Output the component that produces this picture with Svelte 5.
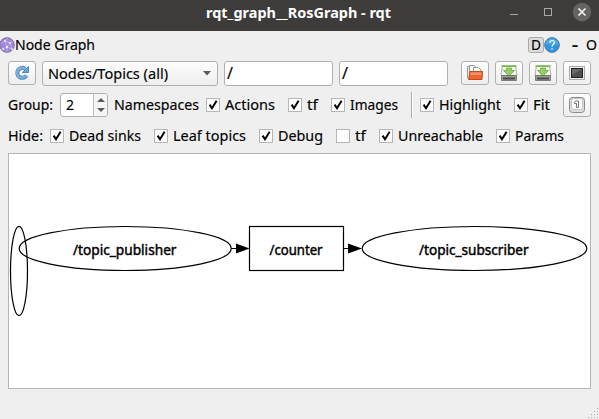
<script>
  const groups = $state([
    { name: 'Actions', w: 50, on: true },
    { name: 'tf', w: 11, on: true },
    { name: 'Images', w: 48, on: true }
  ]);
  const view = $state([
    { name: 'Highlight', w: 62, on: true },
    { name: 'Fit', w: 17, on: true }
  ]);
  const hidden = $state([
    { name: 'Dead sinks', w: 72, on: true },
    { name: 'Leaf topics', w: 73, on: true },
    { name: 'Debug', w: 45, on: true },
    { name: 'tf', w: 11, on: false },
    { name: 'Unreachable', w: 85, on: true },
    { name: 'Params', w: 49, on: true }
  ]);
</script>

{#snippet label(text, w)}
  <svg class="label" width={w} height="20"><text x="0" y="15" textLength={w} lengthAdjust="spacingAndGlyphs">{text}</text></svg>
{/snippet}

{#snippet check(item)}
  <button class="check" role="checkbox" aria-checked={item.on} aria-label={item.name} onclick={() => (item.on = !item.on)}>
    <span class="box">
      {#if item.on}
        <svg width="12" height="12"><path d="M2.6 5.6 5 9.2 9.6 1.8" fill="none" stroke="#000" stroke-width="2" /></svg>
      {/if}
    </span>
    {@render label(item.name, item.w)}
  </button>
{/snippet}

{#snippet save()}
  <svg width="18" height="18" viewBox="0 0 18 18">
    <path d="M2.300 2.500h13.400l1.300 9H1z" fill="#f4f4f1" stroke="#9b9d98" stroke-width=".8" />
    <path d="M1.500 1.200h15v1.800h-15z" fill="#72b84b" />
    <path d="M3 3h12v1.300H3z" fill="#fff" />
    <path d="M6.500 4h5v2.500h3L9 12 3.500 6.500h3z" fill="#99cf62" stroke="#6aa644" stroke-width=".8" />
    <path d="M1.500 11.500h15v5h-15z" fill="#999b96" stroke="#696b67" stroke-width=".8" />
    <path d="M3 14.500h12" stroke="#4b4d49" stroke-width="2" />
  </svg>
{/snippet}

<main>
  <header>
    <svg class="title" width="185" height="24"><text x="0" y="18" textLength="185" lengthAdjust="spacingAndGlyphs">rqt_graph__RosGraph - rqt</text></svg>
    <svg class="window" width="95" height="24" viewBox="0 0 95 24">
      <path d="M6 14.500h8" stroke="#a9a8a5" />
      <rect x="40.500" y="8.500" width="7" height="7" fill="none" stroke="#a9a8a5" />
      <circle cx="78" cy="12" r="9.200" fill="#666562" />
      <path d="m74.500 8.500 7 7m0-7-7 7" stroke="#fff" stroke-width="1.500" />
    </svg>
  </header>

  <div class="dock">
    <svg width="15" height="16" viewBox="0 0 15 16">
      <circle cx="7" cy="8" r="7.300" fill="#a186dd" stroke="#77718a" />
      <path d="m1 7 4-3 5 2 3-2M5 4l2 6-4 2M10 6l-3 4 5 2M7 10v5M5 4l3-3M10 6l2 6" fill="none" stroke="#cbb8ef" stroke-width=".7" />
      <g fill="#f0e9ff"><circle cx="5" cy="4" r="1.100" /><circle cx="10" cy="6" r="1.100" /><circle cx="7" cy="10" r="1.200" /><circle cx="3" cy="12" r=".9" /><circle cx="12" cy="12" r=".9" /></g>
    </svg>
    {@render label('Node Graph', 80)}
    <span class="grow"></span>
    <span class="dbtn">{@render label('D', 10)}</span>
    <svg class="help" width="16" height="16" viewBox="0 0 16 16">
      <circle cx="8" cy="8" r="7.400" fill="#2d94df" stroke="#5f8098" />
      <path d="M1.500 8a6.500 6.500 0 0 1 13 0q-6-2-13 0" fill="#51abe8" />
      <path d="M5.700 5.600Q6 3.500 8.200 3.500t2.200 2Q10.400 7 8.800 8 8 8.700 8 9.800" fill="none" stroke="#fff" stroke-width="1.200" />
      <path d="M8 11.200v1.400" stroke="#fff" stroke-width="1.400" />
    </svg>
    <span class="dash">{@render label('-', 6)}</span>
    <span class="float">{@render label('O', 11)}</span>
  </div>

  <div class="tools">
    <button class="tool" aria-label="Refresh">
      <svg width="18" height="18" viewBox="0 0 18 18">
        <path d="M12.200 4.800A5 5 0 1 0 13.500 11.500" fill="none" stroke="#4f8abd" stroke-width="4" />
        <path d="M9.500 8.500h6V2.500z" fill="#6ba5d5" stroke="#4f8abd" />
        <path d="M12.200 4.900A5 5 0 1 0 13.200 11.500" fill="none" stroke="#7fb2dc" stroke-width="2.200" />
      </svg>
    </button>
    <div class="combo">
      {@render label('Nodes/Topics (all)', 120)}
      <svg width="8" height="5"><path d="M0 0h8L4 4.500z" fill="#5b5b5b" /></svg>
    </div>
    <div class="field">{@render label('/', 6)}</div>
    <div class="field">{@render label('/', 6)}</div>
    <span class="grow"></span>
    <button class="tool" aria-label="Open">
      <svg width="18" height="18" viewBox="0 0 18 18">
        <path d="M1.500 14V2.500h4" fill="#eee" stroke="#999" />
        <path d="M3.500 14V1.500h5l1.500 2V8" fill="#fff" stroke="#999" />
        <path d="M7.500 9V3.500h5l2.500 2.500v3" fill="#fff" stroke="#999" />
        <path d="M4 7.500h12.500l-.5 8H2.500z" fill="#ec6534" stroke="#c94719" />
        <path d="M4.500 8.500h11l-.3 2.500H4.200z" fill="#f5936c" />
      </svg>
    </button>
    <button class="tool" aria-label="Save DOT">{@render save()}</button>
    <button class="tool" aria-label="Save SVG">{@render save()}</button>
    <button class="tool" aria-label="Save image">
      <svg width="18" height="18" viewBox="0 0 18 18">
        <rect x="1.500" y="2.500" width="15" height="13" fill="#eee" stroke="#aaa" />
        <rect x="3.500" y="4.500" width="11" height="9" fill="#505050" stroke="#222" />
        <path d="M4 5h10L4 11z" fill="#6a6a6a" />
      </svg>
    </button>
  </div>

  <div class="options">
    {@render label('Group:', 45)}
    <div class="spin">
      <span class="value">{@render label('2', 8)}</span>
      <span class="steps">
        <svg width="8" height="4"><path d="M0 4 4 0l4 4z" fill="#5b5b5b" /></svg>
        <svg width="8" height="4"><path d="m0 0 4 4 4-4z" fill="#5b5b5b" /></svg>
      </span>
    </div>
    {@render label('Namespaces', 85)}
    <div class="checks">{#each groups as item}{@render check(item)}{/each}</div>
    <i class="separator"></i>
    <div class="checks second">{#each view as item}{@render check(item)}{/each}</div>
    <span class="grow"></span>
    <button class="tool" aria-label="Fit in view">
      <svg width="18" height="18" viewBox="0 0 18 18">
        <rect x="1.500" y="1.500" width="15" height="15" rx="3" fill="#ddd" stroke="#8a8a8a" />
        <rect x="3.500" y="2.500" width="11" height="11" rx="2" fill="#fafafa" stroke="#c5c5c5" />
        <path d="M8.500 11.500v-4h-2v-1.500l1.500-1h2.500v6.500z" fill="#fff" stroke="#777" />
      </svg>
    </button>
  </div>

  <div class="hide">
    {@render label('Hide:', 35)}
    <div class="checks">{#each hidden as item}{@render check(item)}{/each}</div>
  </div>

  <section>
    <svg width="581" height="234" viewBox="9 154 581 234">
      <g fill="none" stroke="#000" stroke-width="1.200">
        <ellipse cx="19" cy="271" rx="8.500" ry="44.700" />
        <ellipse cx="125.200" cy="248.500" rx="106" ry="22" />
        <rect x="249.500" y="226.500" width="94" height="44" />
        <ellipse cx="474.500" cy="248.500" rx="112.300" ry="22" />
        <path d="M231 248.500h6M343.500 248.500h6" />
      </g>
      <path d="m236 243.500 13.500 5-13.500 5zM348 243.500l14 5-14 5z" />
      <g class="node">
        <text x="73" y="254.500" textLength="103.500" lengthAdjust="spacingAndGlyphs">/topic_publisher</text>
        <text x="269.500" y="254.500" textLength="53" lengthAdjust="spacingAndGlyphs">/counter</text>
        <text x="419" y="254.500" textLength="109.500" lengthAdjust="spacingAndGlyphs">/topic_subscriber</text>
      </g>
    </svg>
  </section>
  <footer>
    <svg width="11" height="11"><path d="M9 0h1v1H9zM6 3h1v1H6zM9 3h1v1H9zM3 6h1v1H3zM6 6h1v1H6zM9 6h1v1H9zM0 9h1v1H0zM3 9h1v1H3zM6 9h1v1H6zM9 9h1v1H9z" fill="#aaa" /></svg>
  </footer>
</main>

<style>
  :global(body) { margin: 0; }
  * { box-sizing: border-box; }
  main {
    width: 599px; height: 419px; overflow: hidden; background: #efefef;
    display: flex; flex-direction: column;
    font-family: "Noto Sans", "Open Sans", sans-serif; font-size: 14.300px; color: #000;
  }
  svg { display: block; flex: none; }
  .label { overflow: visible; stroke: #000; stroke-width: .15; }
  header { height: 31px; background: #3d3c3a; display: flex; flex: none; padding-left: 206px; }
  .title { fill: #fff; font-size: 14px; font-weight: 700; overflow: visible; }
  .window { margin-left: 113px; }
  .grow { flex: 1; }
  .dock { height: 30px; display: flex; align-items: center; flex: none; padding: 0 1px 3px 0; }
  .dbtn {
    width: 16px; height: 16px; display: flex; align-items: center; justify-content: center;
    border: 1px solid #aaa; border-radius: 3px; background: #dedede;
  }
  .dash { margin-left: 12px; font-weight: 700; }
  .float { margin-left: 8px; }
  .dock { padding-right: 2px; }
  .tools { height: 25px; display: flex; gap: 6px; padding: 0 8px; flex: none; }
  button { appearance: none; margin: 0; padding: 0; border: 0; background: none; font: inherit; }
  .tool, .combo, .spin, .field { border: 1px solid #b0b0b0; border-radius: 3px; }
  .tool {
    width: 28px; height: 24px; display: flex; align-items: center; justify-content: center;
    background: linear-gradient(#fff, #eee);
  }
  .combo {
    width: 176px; display: flex; align-items: center; justify-content: space-between;
    padding: 0 6px 0 5px; background: linear-gradient(#fdfdfd, #eee);
  }
  .field { width: 109px; background: #fff; padding: 2px; font-size: 17px; }
  .options { height: 26px; margin-top: 6px; display: flex; align-items: center; padding: 0 8px; flex: none; }
  .spin { width: 48px; height: 24px; margin: 0 6px 0 7px; display: flex; background: #fff; overflow: hidden; }
  .value { width: 33px; padding: 1px 0 0 5px; border-right: 1px solid #bbb; }
  .steps {
    flex: 1; display: flex; flex-direction: column; gap: 6px; align-items: center; justify-content: center;
    background: #f6f6f6;
  }
  .checks { display: flex; gap: 13px; margin-left: 7px; }
  .check { display: flex; align-items: center; gap: 5px; }
  .box { width: 14px; height: 14px; border: 1px solid #b6b6b6; background: #fff; }
  .separator { width: 2px; height: 26px; margin-left: 13px; border-left: 1px solid #aaa; border-right: 1px solid #fff; }
  .second { margin-left: 7px; }
  .hide { height: 35px; display: flex; align-items: center; padding: 0 8px; flex: none; }
  section { width: 583px; height: 236px; margin-left: 8px; border: 1px solid #b5b5b5; background: #fff; flex: none; }
  .node { font-size: 14px; stroke: #000; stroke-width: .45; }
  footer { flex: 1; display: flex; align-items: flex-end; justify-content: flex-end; }
</style>
